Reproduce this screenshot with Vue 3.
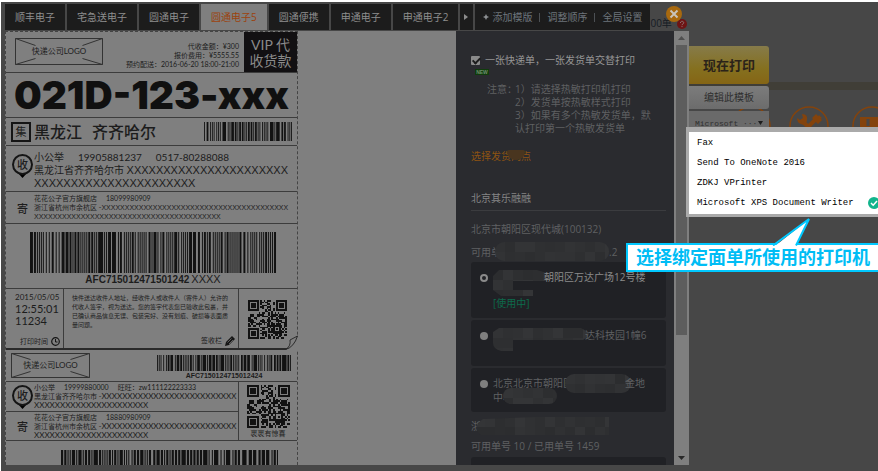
<script setup>
import { ref } from 'vue'

const tabs = ['顺丰电子', '宅急送电子', '圆通电子', '圆通电子5', '圆通便携', '申通电子', '申通电子2']
const activeTab = ref('圆通电子5')
const alternate = ref(true)
const site = ref('a')
const printers = ['Fax', 'Send To OneNote 2016', 'ZDKJ VPrinter', 'Microsoft XPS Document Writer']
const chosen = ref(printers[3])

const x = (n) => 'X'.repeat(n)

function random(seed) {
  let s = seed
  return () => {
    s = (s * 1103515245 + 12345) % 2147483648
    return s / 2147483648
  }
}

// Bars as one path in a box of `total` modules by 10
function bars(seed, total) {
  const next = random(seed)
  let d = ''
  let at = 0
  while (at < total) {
    const w = Math.min(1 + Math.floor(next() * next() * 4.5), total - at)
    d += `M${at} 0h${w}v10h-${w}z`
    at += w + 1 + Math.floor(next() * next() * 2.2)
  }
  return d
}

// Square code, 25 by 25 modules, with three finder marks and one alignment mark
function square(seed) {
  const next = random(seed)
  let d = ''
  const finder = (r, c) => {
    const m = Math.max(Math.abs(r - 3), Math.abs(c - 3))
    return m === 3 || m <= 1
  }
  for (let r = 0; r < 25; r++) {
    for (let c = 0; c < 25; c++) {
      let on = next() > 0.46
      if (r < 8 && c < 8) on = r < 7 && c < 7 && finder(r, c)
      else if (r < 8 && c > 16) on = r < 7 && c > 17 && finder(r, c - 18)
      else if (r > 16 && c < 8) on = r > 17 && c < 7 && finder(r - 18, c)
      else if (r > 15 && r < 21 && c > 15 && c < 21) {
        on = Math.max(Math.abs(r - 18), Math.abs(c - 18)) !== 1
      }
      if (on) d += `M${c} ${r}h1v1h-1z`
    }
  }
  return d
}

function tiles(seed, cols, rows) {
  const next = random(seed)
  const list = []
  for (let r = 0; r < rows; r++) {
    for (let c = 0; c < cols; c++) {
      const v = 44 + Math.floor(next() * 9)
      list.push({ x: c * 10, y: r * 10, fill: `rgb(${v},${v + 1},${v + 3})` })
    }
  }
  return list
}

const codeTop = bars(7, 100)
const codeMain = bars(23, 250)
const codeSmall = bars(41, 150)
const codeEnd = bars(67, 200)
const qr = square(99)
const maskCount = tiles(3, 12, 2)
const maskFirst = tiles(8, 6, 3)
const maskSecond = tiles(13, 10, 3)
const maskThird = tiles(19, 7, 2)
const maskThirdB = tiles(29, 6, 2)
const maskName = tiles(31, 14, 2)
</script>

<template>
  <div class="page">
    <header class="top">
      <nav class="tabs">
        <button v-for="t in tabs" :key="t" class="tab" :class="{ active: t === activeTab }" @click="activeTab = t">{{ t }}</button>
        <button class="tab more" aria-label="更多">
          <svg width="5" height="6" viewBox="0 0 5 6"><path d="M0 0l4 3-4 3z" fill="#8c8c8c" /></svg>
        </button>
      </nav>
      <div class="tools">
        <svg width="6" height="6" viewBox="0 0 6 6"><path d="M3 0l1 2 2 1-2 1-1 2-1-2-2-1 2-1z" fill="#8c8f92" /></svg>
        <a href="#">添加模版</a><i></i><a href="#">调整顺序</a><i></i><a href="#">全局设置</a>
      </div>
      <div class="quota">
        <span>00单</span>
        <svg width="10" height="10" viewBox="0 0 10 10">
          <circle cx="5" cy="5" r="5" fill="#6e1414" />
          <path d="M3.4 4c0-2.2 3.3-2.2 3.3-.2C6.700 5 5 4.900 5 6.200M5 7.100v1" fill="none" stroke="#8d7777" />
        </svg>
      </div>
      <button class="close" aria-label="关闭">
        <svg width="16" height="16" viewBox="0 0 16 16">
          <circle cx="8" cy="8" r="8" fill="#a8690f" />
          <path d="M4.500 4.500l7 7M11.500 4.500l-7 7" stroke="#c9c4bb" stroke-width="2" />
        </svg>
      </button>
    </header>

    <main class="body">
      <section class="preview">
        <div class="sheet">
          <div class="row head">
            <div class="logo">
              <svg viewBox="0 0 88 27" preserveAspectRatio="none"><path d="M.5.5h87v26h-87zM.5.500l20 7M87.500.500l-20 7M.5 26.500l20-6M87.500 26.500l-20-6" fill="none" stroke="#333" /></svg>
              <span>快递公司LOGO</span>
            </div>
            <div class="meta">代收金额：¥300<br>报价费用：¥5555.55<br>预约配送：2016-06-20 18:00-21:00</div>
            <div class="vip">VIP 代<br>收货款</div>
          </div>

          <div class="row zone">021D-123-xxx</div>

          <div class="row city">
            <span class="hub">集</span>
            <span class="place">黑龙江</span><span class="place">齐齐哈尔</span>
            <svg class="bars" viewBox="0 0 100 10" preserveAspectRatio="none"><path :d="codeTop" /></svg>
          </div>

          <div class="row party to">
            <div class="mark">
              <svg width="21" height="25" viewBox="0 0 21 25">
                <path d="M5 18l5.500 6 5.500-6z" />
                <circle cx="10.500" cy="10.500" r="9.500" fill="#7f7f7f" stroke="#151515" stroke-width="2" />
              </svg>
              <span>收</span>
            </div>
            <div class="lines">
              <p><span>小公举</span><span>19905881237</span><span>0517-80288088</span></p>
              <p>黑龙江省齐齐哈尔市 <b>{{ x(22) }}</b></p>
              <p><b>{{ x(22) }}</b></p>
            </div>
          </div>

          <div class="row party from">
            <div class="mark send">寄</div>
            <div class="lines fine">
              <p><span>花花公子官方旗舰店</span><span>18099980909</span></p>
              <p>浙江省杭州市余杭区 -<b>{{ x(40) }}</b></p>
              <p><b>{{ x(40) }}</b></p>
            </div>
          </div>

          <div class="row main-code">
            <svg class="bars" viewBox="0 0 250 10" preserveAspectRatio="none"><path :d="codeMain" /></svg>
            <div class="number">AFC715012471501242<span>XXXX</span></div>
          </div>

          <div class="row sign">
            <div class="date">
              <span>2015/05/05</span>
              <span class="big">12:55:01</span>
              <span class="big">11234</span>
              <span class="foot">打印时间
                <svg width="9" height="9" viewBox="0 0 9 9"><circle cx="4.500" cy="4.500" r="3.800" fill="none" stroke="#151515" stroke-width="1.200" /><path d="M4.500 2v3h2" fill="none" stroke="#151515" /></svg>
              </span>
            </div>
            <div class="terms">
              <p>快件送达收件人地址，经收件人或收件人（寄件人）允许的<br>代收人签字，视为送达。您的签字代表您已验收此包裹，并<br>已确认商品信息无误、包装完好、没有划痕、破损等表面质<br>量问题。</p>
              <span class="foot">签收栏
                <svg width="10" height="10" viewBox="0 0 10 10"><path d="M0 10l1-4 6-6 3 3-6 6z" fill="#151515" /><path d="M2.500 6.500l4-4M4 8l4-4" stroke="#7f7f7f" stroke-width=".7" /></svg>
              </span>
            </div>
            <div class="code">
              <svg class="qr" viewBox="0 0 25 25" shape-rendering="crispEdges"><path :d="qr" /></svg>
            </div>
            <svg class="curl" width="12" height="15" viewBox="0 0 12 15"><path d="M0 14.500Q7 13 12 0V15H0z" fill="#7f7f7f" /><path d="M0 14.300Q8 12 11.500 1L4 5Q5 11 0 14.300" fill="#7f7f7f" stroke="#222" stroke-width=".9" /></svg>
          </div>

          <div class="row stub">
            <div class="logo small">
              <svg viewBox="0 0 79 25" preserveAspectRatio="none"><path d="M.5.5h78v24h-78zM.5.500l19 6M78.500.500l-19 6M.5 24.500l19-6M78.500 24.500l-19-6" fill="none" stroke="#333" /></svg>
              <span>快递公司LOGO</span>
            </div>
            <div class="stub-code">
              <svg class="bars" viewBox="0 0 150 10" preserveAspectRatio="none"><path :d="codeSmall" /></svg>
              <span>AFC7150124715012424</span>
            </div>
          </div>

          <div class="row pair">
            <div class="parties">
              <div class="party mini">
                <div class="mark">
                  <svg width="21" height="25" viewBox="0 0 21 25">
                    <path d="M5 18l5.500 6 5.500-6z" />
                    <circle cx="10.500" cy="10.500" r="9.500" fill="#7f7f7f" stroke="#151515" stroke-width="2" />
                  </svg>
                  <span>收</span>
                </div>
                <div class="lines fine wide">
                  <p><span>小公举</span><span>19999880000</span><span>旺旺：zw111122223333</span></p>
                  <p>黑龙江省齐齐哈尔市 -<b>{{ x(26) }}</b></p>
                  <p><b>{{ x(22) }}</b></p>
                </div>
              </div>
              <div class="party mini">
                <div class="mark send">寄</div>
                <div class="lines fine wide">
                  <p><span>花花公子官方旗舰店</span><span>18880980909</span></p>
                  <p>浙江省杭州市余杭区 -<b>{{ x(26) }}</b></p>
                  <p><b>{{ x(22) }}</b></p>
                </div>
              </div>
            </div>
            <div class="code tall">
              <svg class="qr" viewBox="0 0 25 25" shape-rendering="crispEdges"><path :d="qr" /></svg>
              <span>裹裹有惊喜</span>
            </div>
          </div>

          <div class="row last">
            <svg class="bars" viewBox="0 0 200 10" preserveAspectRatio="none"><path :d="codeEnd" /></svg>
          </div>
        </div>
      </section>

      <aside class="panel">
        <label class="option"><input v-model="alternate" type="checkbox">一张快递单，一张发货单交替打印</label>
        <div class="new">NEW</div>
        <div class="notes">
          <span>注意：</span>
          <ol>
            <li>1）请选择热敏打印机打印</li>
            <li>2）发货单按热敏样式打印</li>
            <li>3）如果有多个热敏发货单，默<br>认打印第一个热敏发货单</li>
          </ol>
        </div>
        <a class="pick" href="#">选择发货网点<i></i></a>
        <h2>北京其乐融融</h2>
        <p class="area">北京市朝阳区现代城(100132)</p>
        <p class="count">可用单
          <svg width="114" height="20" viewBox="0 0 114 20">
            <clipPath id="m1"><rect width="114" height="19" rx="9" /></clipPath>
            <g clip-path="url(#m1)"><rect v-for="(t, i) in maskCount" :key="i" :x="t.x" :y="t.y" width="10" height="10" :fill="t.fill" /></g>
          </svg>.2
        </p>
        <div class="card first">
          <input id="site-a" v-model="site" type="radio" value="a">
          <label for="site-a">
            <svg class="m-first" width="54" height="26" viewBox="0 0 54 26">
              <clipPath id="m2"><path d="M6 0h38l10 3v8H20v9h20v6H8L0 20V6z" /></clipPath>
              <g clip-path="url(#m2)"><rect v-for="(t, i) in maskFirst" :key="i" :x="t.x" :y="t.y" width="10" height="10" :fill="t.fill" /></g>
            </svg>
            <span>朝阳区万达广场12号楼</span>
            <em>[使用中]</em>
          </label>
        </div>
        <div class="card">
          <input id="site-b" v-model="site" type="radio" value="b">
          <label for="site-b">
            <svg class="m-second" width="96" height="30" viewBox="0 0 96 30">
              <clipPath id="m3"><path d="M6 0h82q8 4 8 6t-6 6H20v11H8q-8-2-8-8V4z" /></clipPath>
              <g clip-path="url(#m3)"><rect v-for="(t, i) in maskSecond" :key="i" :x="t.x" :y="t.y" width="10" height="10" :fill="t.fill" /></g>
            </svg>
            <span>达科技园1幢6</span>
          </label>
        </div>
        <div class="card">
          <input id="site-c" v-model="site" type="radio" value="c">
          <label for="site-c">
            <span>北京北京市朝阳区</span>
            <svg class="m-third" width="66" height="19" viewBox="0 0 66 19">
              <clipPath id="m4"><rect width="66" height="19" rx="9" /></clipPath>
              <g clip-path="url(#m4)"><rect v-for="(t, i) in maskThird" :key="i" :x="t.x" :y="t.y" width="10" height="10" :fill="t.fill" /></g>
            </svg>
            <span>金地</span><br>
            <span>中心</span>
            <svg class="m-city" width="54" height="16" viewBox="0 0 54 16">
              <clipPath id="m5"><rect width="54" height="16" rx="8" /></clipPath>
              <g clip-path="url(#m5)"><rect v-for="(t, i) in maskThirdB" :key="i" :x="t.x" :y="t.y" width="10" height="10" :fill="t.fill" /></g>
            </svg>
          </label>
        </div>
        <p class="area name">浙
          <svg width="134" height="18" viewBox="0 0 134 18">
            <clipPath id="m6"><path d="M8 2L60 0h74v18H6Q-4 10 8 2z" /></clipPath>
            <g clip-path="url(#m6)"><rect v-for="(t, i) in maskName" :key="i" :x="t.x" :y="t.y" width="10" height="10" :fill="t.fill" /></g>
          </svg>
        </p>
        <p class="used">可用单号 10 / 已用单号 1459</p>
        <div class="card"></div>
      </aside>

      <div class="scroll">
        <svg width="15" height="14" viewBox="0 0 15 14"><path d="M4 9l3.500-4L11 9z" fill="#505050" /></svg>
        <div class="thumb"></div>
        <div class="track"></div>
        <svg width="15" height="14" viewBox="0 0 15 14"><path d="M4 5l3.500 4L11 5z" fill="#282828" /></svg>
      </div>

      <section class="side">
        <div class="strip"></div>
        <div class="icons">
          <svg width="40" height="40" viewBox="0 0 40 40">
            <circle cx="20" cy="20" r="19" fill="none" stroke="#84430c" stroke-width="1.500" />
          </svg>
          <svg width="40" height="40" viewBox="0 0 40 40">
            <circle cx="20" cy="20" r="19" fill="none" stroke="#84430c" stroke-width="1.500" />
            <path d="M12 14l16 15M27 13L12 28" stroke="#84430c" stroke-width="4" />
            <path d="M8 12l3 2 3-2-1-4q6 0 5 6t-6 4q-4-1-4-6zM23 12l4-4 6 6-4 4zM30 9l3 3-2 1-2-2z" fill="#84430c" />
          </svg>
          <svg width="40" height="40" viewBox="0 0 40 40">
            <circle cx="20" cy="20" r="19" fill="none" stroke="#84430c" stroke-width="1.500" />
            <path d="M8 11h24v15H8z" fill="#84430c" />
            <path d="M16 13v7M16 22v2" stroke="#474747" stroke-width="3" />
          </svg>
        </div>
        <div class="actions">
          <button class="print">现在打印</button>
          <button class="edit">编辑此模板</button>
          <div class="picker">
            <select aria-label="打印机"><option>Microsoft ···</option></select>
            <svg width="5" height="4" viewBox="0 0 5 4"><path d="M0 0h5L2.500 4z" fill="#1c1c1c" /></svg>
          </div>
        </div>
        <ul class="menu">
          <li v-for="p in printers" :key="p" @click="chosen = p">
            {{ p }}
            <svg v-if="p === chosen" width="12" height="12" viewBox="0 0 12 12"><circle cx="6" cy="6" r="6" fill="#12b48c" /><path d="M3 6l2.200 2.200L9 4" fill="none" stroke="#fff" stroke-width="1.500" /></svg>
          </li>
        </ul>
        <div class="callout">
          选择绑定面单所使用的打印机
          <svg width="46" height="30" viewBox="0 0 46 30"><path d="M5 30L39 3 26 30z" fill="#fff" /><path d="M3 29.500L39 3 26 29.500" fill="none" stroke="#00c8ff" stroke-width="2" /></svg>
        </div>
      </section>
    </main>
  </div>
</template>

<style>
body {
  background: #fff;
}
</style>

<style scoped>
* {
  box-sizing: border-box;
}
p, ol, ul, h2 {
  margin: 0;
  padding: 0;
  list-style: none;
}
button, select {
  border: 0;
  padding: 0;
  font: inherit;
}
a {
  color: inherit;
  text-decoration: none;
}
svg {
  display: block;
  flex: none;
}
.page {
  display: flex;
  flex-direction: column;
  height: 100vh;
  padding: 2px 0 6px 4px;
  overflow: hidden;
  border-top: 2px solid #fff;
  border-left: 1px solid #fff;
  background: #474747;
  font: 10px/13px "Open Sans", "Noto Sans CJK SC", sans-serif;
  color: #7d7d7d;
}
.top {
  display: flex;
  position: relative;
  flex: none;
  height: 27px;
}
.tabs {
  display: flex;
  gap: 2px;
}
.tab {
  height: 26px;
  padding: 0 10px;
  background: #1c1c1c;
  color: #8e8e8e;
}
.tab.active {
  background: #7f7f7f;
  color: #9c420d;
}
.tab.more {
  width: 13px;
  padding: 0 4px;
}
.tools {
  display: flex;
  align-items: center;
  gap: 3px;
  height: 26px;
  margin-left: 2px;
  padding: 0 8px;
  background: #1c1c1c;
  color: #6d747b;
}
.tools i {
  width: 1px;
  height: 9px;
  margin: 0 4px;
  background: #4c5054;
}
.quota {
  display: flex;
  align-items: center;
  gap: 5px;
  padding-top: 12px;
  color: #161c24;
}
.close {
  position: absolute;
  top: 2px;
  right: 196px;
  background: none;
}
.body {
  display: flex;
  flex: 1;
  min-height: 0;
}

.preview {
  flex: 1;
  min-width: 0;
  overflow: hidden;
  background: #7f7f7f;
}
.sheet {
  width: 293px;
  border: 1px dashed #444;
  border-bottom: 0;
  color: #1c1c1c;
  font-family: Lato, "Noto Sans CJK SC", sans-serif;
}
.row {
  display: flex;
  border-bottom: 1px solid #3c3c3c;
}
.bars {
  fill: #121212;
}
.head {
  height: 41px;
}
.logo {
  display: grid;
  width: 88px;
  height: 27px;
  margin: 6px 0 0 9px;
  place-items: center;
  font-size: 8px;
}
.logo > * {
  grid-area: 1 / 1;
}
.logo svg {
  width: 100%;
  height: 100%;
}
.meta {
  flex: 1;
  padding: 10px 5px 0 0;
  text-align: right;
  font-size: 7px;
  line-height: 9px;
}
.vip {
  width: 53px;
  padding-top: 5px;
  background: #121012;
  color: #8a8a8a;
  text-align: center;
  font-size: 14px;
  line-height: 16px;
}
.zone {
  justify-content: center;
  height: 45px;
  color: #101010;
  font: 900 39px/44px Inter, "DejaVu Sans", sans-serif;
}
.city {
  align-items: center;
  height: 28px;
  padding: 0 5px;
}
.hub {
  width: 20px;
  height: 20px;
  margin-right: 3px;
  border: 2px solid #151515;
  text-align: center;
  font-size: 11px;
  line-height: 15px;
}
.place {
  margin-right: 10px;
  font-size: 16px;
  font-weight: 500;
}
.city .bars {
  width: 88px;
  height: 19px;
  margin-left: auto;
}
.party {
  display: flex;
}
.mark {
  display: grid;
  width: 28px;
  padding-left: 5px;
  justify-items: center;
  align-content: center;
  font-size: 11px;
  font-weight: 500;
}
.mark > * {
  grid-area: 1 / 1;
}
.mark span {
  padding-top: 4px;
}
.lines {
  white-space: nowrap;
  font-size: 10px;
  line-height: 13px;
}
.lines p {
  height: 13px;
}
.lines span {
  margin-right: 14px;
}
.lines b {
  font: 11px/8px "Liberation Sans", sans-serif;
}
.lines.fine {
  font-size: 7px;
  line-height: 9px;
}
.lines.fine p {
  height: 9px;
}
.lines.fine span {
  margin-right: 9px;
}
.lines.fine b {
  font-size: 7px;
}
.lines.wide b {
  font: 8px/8px Lato, sans-serif;
}
.to {
  height: 46px;
  padding-top: 5px;
}
.to .mark {
  align-content: start;
  padding-top: 3px;
}
.from {
  height: 32px;
  padding-top: 2px;
}
.main-code {
  flex-direction: column;
  align-items: center;
  height: 65px;
  padding: 8px 0 0 3px;
}
.main-code .bars {
  width: 247px;
  height: 41px;
}
.number {
  font: bold 10px/14px "Liberation Sans", sans-serif;
}
.number span {
  margin-left: 2px;
  font: 11px "Liberation Sans", sans-serif;
}
.sign {
  position: relative;
  height: 61px;
  border-bottom: 2px solid #2a2a2a;
}
.date {
  display: flex;
  flex-direction: column;
  width: 58px;
  padding: 2px 0 0 9px;
  border-right: 1px solid #3c3c3c;
  font-size: 8px;
  line-height: 12px;
}
.date .big {
  font-size: 11px;
}
.foot {
  display: flex;
  align-items: center;
  gap: 3px;
  margin-top: auto;
  padding: 0 3px 1px 0;
  justify-content: flex-end;
  font-size: 7px;
}
.terms {
  display: flex;
  flex: 1;
  flex-direction: column;
  padding-left: 8px;
  border-right: 1px solid #3c3c3c;
}
.terms p {
  padding-top: 4px;
  white-space: nowrap;
  font-size: 6px;
  line-height: 9px;
}
.code {
  flex: none;
  width: 58px;
  padding: 11px 0 0 9px;
}
.qr {
  width: 39px;
  height: 39px;
  fill: #121212;
}
.curl {
  position: absolute;
  right: -1px;
  bottom: -2px;
}
.stub {
  justify-content: space-between;
  height: 32px;
}
.logo.small {
  width: 79px;
  height: 25px;
  margin: 3px 0 0 5px;
}
.stub-code {
  padding: 5px 6px 0 0;
  text-align: center;
  font: bold 7px/10px "Liberation Sans", sans-serif;
}
.stub-code .bars {
  width: 134px;
  height: 16px;
}
.parties {
  flex: 1;
  min-width: 0;
  border-right: 1px solid #3c3c3c;
}
.mini {
  height: 29px;
  padding-top: 1px;
}
.mini + .mini {
  border-top: 1px solid #3c3c3c;
}
.code.tall {
  display: flex;
  flex-direction: column;
  align-items: center;
  padding: 3px 0 0;
  font-size: 7px;
  line-height: 10px;
}
.tall .qr {
  width: 43px;
  height: 43px;
}
.last {
  justify-content: center;
  padding: 9px 0 0 35px;
  border-bottom: 0;
}
.last .bars {
  width: 217px;
  height: 40px;
}

.panel {
  flex: none;
  width: 218px;
  padding: 23px 8px 0 15px;
  overflow: hidden;
  background: #2a2b2f;
  color: #5f6062;
}
.option {
  display: flex;
  align-items: center;
  gap: 5px;
  color: #969696;
}
.option input {
  width: 9px;
  height: 9px;
  margin: 0;
  appearance: none;
  border-radius: 1px;
  background: #8a8a8a;
}
.option input:checked::after {
  display: block;
  width: 3px;
  height: 6px;
  margin: 0 0 0 3px;
  border: solid #1c1c1c;
  border-width: 0 2px 2px 0;
  content: "";
  transform: rotate(45deg);
}
.new {
  width: 14px;
  height: 6px;
  margin: 2px 0 8px 4px;
  background: #103c0c;
  color: #6f8f6c;
  text-align: center;
  font: bold 5px/6px "Liberation Sans", sans-serif;
}
.notes {
  display: flex;
  padding-left: 16px;
  white-space: nowrap;
}
.notes ol {
  margin-left: -2px;
}
.pick {
  display: inline-block;
  position: relative;
  margin-top: 15px;
  color: #8d5312;
}
.pick i {
  position: absolute;
  top: 0;
  left: 36px;
  width: 18px;
  height: 10px;
  border-radius: 2px 2px 9px 9px;
  background: #49351f;
}
h2 {
  margin-top: 27px;
  padding-bottom: 4px;
  border-bottom: 1px solid #3b3c3f;
  color: #858585;
  font-size: 10px;
  font-weight: 400;
  line-height: 16px;
}
.area {
  margin-top: 12px;
}
.count {
  display: flex;
  align-items: center;
  height: 20px;
  margin-top: 6px;
}
.count svg {
  margin-left: -6px;
}
.card {
  display: flex;
  gap: 5px;
  min-height: 44px;
  margin-bottom: 2px;
  padding: 8px 9px;
  border-radius: 3px;
  background: #202125;
}
.card.first {
  min-height: 55px;
  color: #8b8b8b;
}
.card input {
  flex: none;
  width: 8px;
  height: 8px;
  margin: 4px 0 0;
  appearance: none;
  border-radius: 50%;
  background: #7f7f7f;
}
.card input:checked {
  border: 2px solid #8a8a8a;
  background: #202125;
}
.card label {
  position: relative;
  line-height: 14px;
  white-space: nowrap;
}
.card svg {
  display: inline-block;
  vertical-align: top;
}
.card em {
  display: block;
  color: #0d6b4c;
  font-style: normal;
}
.m-first {
  margin-right: -3px;
}
.m-second {
  margin-right: -4px;
}
.m-third {
  margin: -2px -6px 0 -8px;
}
.m-city {
  margin: -2px 0 0 -10px;
}
.card .m-third {
  margin-bottom: -5px;
}
.card .m-city {
  margin-bottom: -2px;
}
.area.name {
  display: flex;
  align-items: center;
  height: 18px;
  margin-top: 5px;
}
.name svg {
  margin-left: -6px;
}
.used {
  margin: 5px 0 4px;
}

.scroll {
  display: flex;
  flex: none;
  flex-direction: column;
  width: 15px;
  background: #7f7f7f;
}
.thumb {
  flex: 290;
  width: 11px;
  margin-left: 2px;
  background: #5d5d5d;
}
.track {
  flex: 116;
}

.side {
  position: relative;
  flex: none;
  width: 189px;
}
.strip {
  position: absolute;
  top: 51px;
  right: 0;
  left: 0;
  height: 8px;
  background: #403e37;
}
.icons {
  display: flex;
  position: absolute;
  top: 75px;
  left: 42px;
  width: 147px;
  gap: 18px;
  overflow: hidden;
}
.icons svg + svg + svg {
  margin-left: 5px;
}
.actions {
  display: flex;
  position: relative;
  flex-direction: column;
  gap: 2px;
  width: 80px;
  padding-top: 15px;
}
.print {
  height: 38px;
  border-radius: 0 3px 3px 0;
  background: linear-gradient(#867b4a, #85701f 60%, #856515);
  color: #2b2319;
  font-size: 13px;
  font-weight: 700;
}
.edit {
  height: 23px;
  border-radius: 0 3px 3px 0;
  background: linear-gradient(#7c7c7c, #6c6c6c);
  color: #2e2e2e;
}
.picker {
  display: flex;
  position: relative;
  align-items: center;
  height: 24px;
  background: #6a6a6a;
}
.picker select {
  width: 100%;
  height: 24px;
  padding-left: 6px;
  appearance: none;
  background: none;
  color: #303030;
  font: 8px "Liberation Mono", monospace;
}
.picker svg {
  position: absolute;
  right: 6px;
}
.menu {
  position: absolute;
  top: 96px;
  right: 0;
  left: -3px;
  padding: 1px 0 1px 8px;
  border: 3px solid #aaa;
  border-width: 5px 0 3px 3px;
  background: #fff;
  color: #000;
  font: 9px/20px "Liberation Mono", "Noto Sans CJK SC", monospace;
}
.menu li {
  display: flex;
  align-items: center;
  justify-content: space-between;
  height: 20px;
  margin-right: -2px;
}
.callout {
  position: absolute;
  top: 212px;
  right: 0;
  left: -63px;
  height: 29px;
  padding-left: 8px;
  border: 2px solid #00c8ff;
  border-right: 0;
  background: #fff;
  color: #00bdf5;
  font-size: 18px;
  font-weight: 700;
  line-height: 25px;
  white-space: nowrap;
}
.callout svg {
  position: absolute;
  top: -29px;
  left: 142px;
}
</style>
